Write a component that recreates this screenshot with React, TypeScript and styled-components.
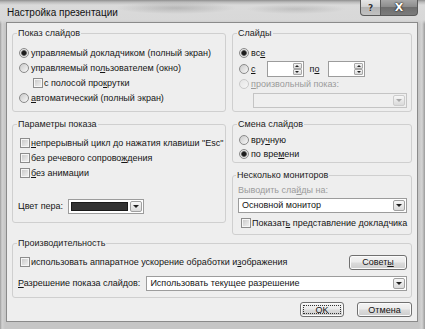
import React from 'react';
import styled, { createGlobalStyle } from 'styled-components';

const GlobalStyle = createGlobalStyle`
  html, body { margin: 0; padding: 0; }
  body {
    width: 425px;
    height: 329px;
    overflow: hidden;
    font-family: "Liberation Sans", Arial, sans-serif;
    font-size: 9px;
    color: #161616;
    background: #c6c6c6;
  }
`;

const Window = styled.div`
  width: 425px;
  height: 329px;
  box-sizing: border-box;
  display: flex;
  flex-direction: column;
  padding: 0 7px 7px 6px;
  background:
    linear-gradient(180deg, #8e8e8e 0, #b9b9b9 2px, #dadada 5px, #d8d8d8 20px, rgba(200, 200, 200, 0) 24px),
    linear-gradient(90deg, #9c9c9c 0, #d2d2d2 2px, #c6c6c6 5px, #c6c6c6 calc(100% - 6px), #d4d4d4 calc(100% - 3px), #9a9a9a 100%);
`;

const TitleBar = styled.div`
  height: 22px;
  display: flex;
  align-items: flex-start;
  background:
    radial-gradient(ellipse 60px 6px at 170px 8px, rgba(120, 120, 120, 0.35), transparent),
    radial-gradient(ellipse 50px 5px at 290px 9px, rgba(130, 130, 130, 0.3), transparent);
`;

const Title = styled.div`
  padding: 7px 0 0 1px;
  font-size: 10px;
  line-height: 12px;
  color: #111;
`;

const Caption = styled.div`
  margin-left: auto;
  display: flex;
  height: 16px;
`;

const CapButton = styled.div<{ $close?: boolean }>`
  width: ${p => (p.$close ? 37 : 21)}px;
  box-sizing: border-box;
  display: flex;
  align-items: center;
  justify-content: center;
  border: 1px solid #5a5a5a;
  border-top: none;
  border-left: ${p => (p.$close ? 'none' : '1px solid #5a5a5a')};
  border-radius: ${p => (p.$close ? '0 0 4px 0' : '0 0 0 4px')};
  background: ${p =>
    p.$close
      ? 'linear-gradient(#a8a8a8 0, #8a8a8a 50%, #6e6e6e 50%, #7c7c7c 100%)'
      : 'linear-gradient(#e6e6e6 0, #cfcfcf 50%, #b4b4b4 50%, #c2c2c2 100%)'};
  color: ${p => (p.$close ? '#fff' : '#333')};
  font-family: "DejaVu Sans", sans-serif;
  font-weight: bold;
  font-size: ${p => (p.$close ? 11 : 9)}px;
  text-shadow: ${p => (p.$close ? '0 0 2px #222, 0 0 1px #000' : '0 0 1px #fff')};
`;

const Client = styled.div`
  flex: 1;
  display: flex;
  flex-direction: column;
  border: 1px solid #8a8a8a;
  background: #eeeeee;
  padding: 4px 5px 4px;
`;

const Grid = styled.div`
  display: grid;
  grid-template-columns: 214px 180px;
  column-gap: 6px;
  row-gap: 6px;
`;

const Stack = styled.div`
  display: flex;
  flex-direction: column;
  gap: 6px;
`;

const Group = styled.fieldset<{ $pad: string; $start?: boolean; $top?: number }>`
  margin: ${p => p.$top ?? 0}px 0 0;
  min-width: 0;
  border: 1px solid #cfcfcf;
  border-radius: 3px;
  padding: ${p => p.$pad};
  display: flex;
  flex-direction: column;
  align-self: ${p => (p.$start ? 'start' : 'stretch')};
`;

const Legend = styled.legend`
  padding: 0 1px;
  margin-left: -2px;
  line-height: 12px;
  color: #1c1c1c;
`;

const Row = styled.div<{ $h?: number; $indent?: number; $top?: number; $disabled?: boolean }>`
  display: flex;
  align-items: center;
  height: ${p => p.$h ?? 15}px;
  margin-top: ${p => p.$top ?? 0}px;
  padding-left: ${p => p.$indent ?? 0}px;
  color: ${p => (p.$disabled ? '#9b9b9b' : '#151515')};
  white-space: pre;
`;

const Text = styled.span<{ $left?: number }>`
  margin-left: ${p => p.$left ?? 0}px;
  white-space: pre;
`;

const Radio = styled.span<{ $checked?: boolean; $disabled?: boolean }>`
  flex: none;
  width: 10px;
  height: 10px;
  margin-right: 2px;
  box-sizing: border-box;
  border-radius: 50%;
  border: 1px solid ${p => (p.$disabled ? '#c9c9c9' : '#8a8a8a')};
  background: ${p =>
    p.$checked
      ? 'radial-gradient(circle, #1c1c1c 0 1.8px, #6a6a6a 2.6px, #dedede 3.2px, #f7f7f7 100%)'
      : p.$disabled
      ? 'linear-gradient(135deg, #e4e4e4, #f6f6f6)'
      : 'linear-gradient(135deg, #c9c9c9, #f8f8f8)'};
`;

const Check = styled.span`
  flex: none;
  width: 10px;
  height: 10px;
  margin: 0 1px 0 1px;
  box-sizing: border-box;
  border: 1px solid #8c8c8c;
  background: linear-gradient(135deg, #c6c6c6, #f4f4f4);
  box-shadow: inset 0 0 0 1px #f6f6f6;
`;

const U = styled.span`
  text-decoration: underline;
  text-underline-offset: 1px;
`;

const Combo = styled.div<{ $w?: number; $disabled?: boolean; $left?: number }>`
  display: flex;
  align-items: stretch;
  height: 15px;
  width: ${p => (p.$w ? `${p.$w}px` : 'auto')};
  flex: ${p => (p.$w ? 'none' : '1')};
  margin-left: ${p => p.$left ?? 0}px;
  box-sizing: border-box;
  border: 1px solid ${p => (p.$disabled ? '#c4c4c4' : '#9c9c9c')};
  background: ${p => (p.$disabled ? '#efefef' : '#fff')};
  padding: 1px;
`;

const ComboText = styled.span`
  flex: 1;
  padding-left: 2px;
  line-height: 11px;
  color: #141414;
  white-space: nowrap;
  overflow: hidden;
`;

const Swatch = styled.span`
  flex: 1;
  margin: 1px 2px 1px 1px;
  background: #333;
  border: 1px solid #1a1a1a;
`;

const DropButton = styled.span<{ $disabled?: boolean }>`
  flex: none;
  width: 12px;
  box-sizing: border-box;
  border: 1px solid ${p => (p.$disabled ? '#cccccc' : '#a0a0a0')};
  border-radius: 2px;
  background: linear-gradient(#f7f7f7, #dadada);
  display: flex;
  align-items: center;
  justify-content: center;
  &::after {
    content: '';
    border-left: 3px solid transparent;
    border-right: 3px solid transparent;
    border-top: 3px solid ${p => (p.$disabled ? '#a8a8a8' : '#202020')};
  }
`;

const Spin = styled.div<{ $left: number }>`
  width: 37px;
  height: 16px;
  margin-left: ${p => p.$left}px;
  box-sizing: border-box;
  display: flex;
  justify-content: flex-end;
  border: 1px solid #9c9c9c;
  background: #fff;
  padding: 1px;
`;

const SpinButtons = styled.span`
  width: 9px;
  display: flex;
  flex-direction: column;
`;

const SpinHalf = styled.span<{ $up?: boolean }>`
  flex: 1;
  box-sizing: border-box;
  border: 1px solid #a8a8a8;
  border-radius: 1px;
  background: linear-gradient(#f6f6f6, #d9d9d9);
  display: flex;
  align-items: center;
  justify-content: center;
  &::after {
    content: '';
    border-left: 2px solid transparent;
    border-right: 2px solid transparent;
    ${p => (p.$up ? 'border-bottom: 2px solid #222;' : 'border-top: 2px solid #222;')}
  }
`;

const Button = styled.button<{ $w: number }>`
  width: ${p => p.$w}px;
  height: 15px;
  flex: none;
  padding: 0;
  box-sizing: border-box;
  font: inherit;
  color: #141414;
  border: 1px solid #707070;
  border-radius: 3px;
  background: linear-gradient(#f3f3f3 0, #ebebeb 48%, #dcdcdc 52%, #cdcdcd 100%);
  box-shadow: inset 0 0 0 1px #fbfbfb;
  display: flex;
  align-items: center;
  justify-content: center;
`;

const Focus = styled.span`
  box-sizing: border-box;
  width: calc(100% - 4px);
  height: calc(100% - 4px);
  border: 1px dotted #333;
  display: flex;
  align-items: center;
  justify-content: center;
`;

const Footer = styled.div`
  display: flex;
  justify-content: flex-end;
  gap: 13px;
  margin-top: 4px;
`;

const Spacer = styled.span`
  flex: 1;
`;

export default function App() {
  return (
    <>
      <GlobalStyle />
      <Window>
        <TitleBar>
          <Title>Настройка презентации</Title>
          <Caption>
            <CapButton>?</CapButton>
            <CapButton $close>X</CapButton>
          </Caption>
        </TitleBar>
        <Client>
          <Grid>
            <Group $pad="6px 6px 6px">
              <Legend>Показ слайдов</Legend>
              <Row>
                <Radio $checked />
                <Text>управляемый <U>д</U>окладчиком (полный экран)</Text>
              </Row>
              <Row>
                <Radio />
                <Text>управляемый по<U>л</U>ьзователем (окно)</Text>
              </Row>
              <Row $indent={13}>
                <Check />
                <Text>с полосой про<U>к</U>рутки</Text>
              </Row>
              <Row>
                <Radio />
                <Text><U>а</U>втоматический (полный экран)</Text>
              </Row>
            </Group>

            <Group $pad="6px 4px 3px 6px">
              <Legend>Слайды</Legend>
              <Row>
                <Radio $checked />
                <Text>вс<U>е</U></Text>
              </Row>
              <Row $h={17}>
                <Radio />
                <Text><U>с</U></Text>
                <Spin $left={11}>
                  <SpinButtons>
                    <SpinHalf $up />
                    <SpinHalf />
                  </SpinButtons>
                </Spin>
                <Text $left={6}>п<U>о</U></Text>
                <Spin $left={9}>
                  <SpinButtons>
                    <SpinHalf $up />
                    <SpinHalf />
                  </SpinButtons>
                </Spin>
              </Row>
              <Row $h={14} $disabled>
                <Radio $disabled />
                <Text><U>п</U>роизвольный показ:</Text>
              </Row>
              <Row $top={2} $indent={14}>
                <Combo $disabled>
                  <ComboText />
                  <DropButton $disabled />
                </Combo>
              </Row>
            </Group>

            <Group $pad="5px 6px 9px" $start>
              <Legend>Параметры показа</Legend>
              <Row>
                <Check />
                <Text><U>н</U>епрерывный цикл до нажатия клавиши "Esc"</Text>
              </Row>
              <Row>
                <Check />
                <Text>без речевого сопрово<U>ж</U>дения</Text>
              </Row>
              <Row>
                <Check />
                <Text><U>б</U>ез анимации</Text>
              </Row>
              <Row $h={14} $top={19}>
                <Text $left={-1}>Цвет пера:</Text>
                <Combo $w={76} $left={5}>
                  <Swatch />
                  <DropButton />
                </Combo>
              </Row>
            </Group>

            <Stack>
              <Group $pad="3px 6px 1px">
                <Legend>Смена слайдов</Legend>
                <Row $h={14}>
                  <Radio />
                  <Text>вру<U>ч</U>ную</Text>
                </Row>
                <Row $h={14}>
                  <Radio $checked />
                  <Text>по вре<U>м</U>ени</Text>
                </Row>
              </Group>
              <Group $pad="2px 4px 4px 5px">
                <Legend>Несколько мониторов</Legend>
                <Row $h={14} $disabled>
                  <Text>Выводить сла<U>й</U>ды на:</Text>
                </Row>
                <Row $h={14} $top={1}>
                  <Combo>
                    <ComboText>Основной монитор</ComboText>
                    <DropButton />
                  </Combo>
                </Row>
                <Row $h={14} $top={4} $indent={2}>
                  <Check />
                  <Text>Показат<U>ь</U> представление докладчика</Text>
                </Row>
              </Group>
            </Stack>
          </Grid>

          <Group $pad="5px 4px 7px 6px" $top={2}>
            <Legend>Производительность</Legend>
            <Row $h={16}>
              <Check />
              <Text>использовать аппаратное ускорение обработки и<U>з</U>ображения</Text>
              <Spacer />
              <Button $w={58}>
                <Text>Совет<U>ы</U></Text>
              </Button>
            </Row>
            <Row $h={14} $top={6}>
              <Text $left={-1}><U>Р</U>азрешение показа слайдов:</Text>
              <Combo $left={6}>
                <ComboText>Использовать текущее разрешение</ComboText>
                <DropButton />
              </Combo>
            </Row>
          </Group>

          <Footer>
            <Button $w={44}>
              <Focus>OK</Focus>
            </Button>
            <Button $w={55}>Отмена</Button>
          </Footer>
        </Client>
      </Window>
    </>
  );
}
